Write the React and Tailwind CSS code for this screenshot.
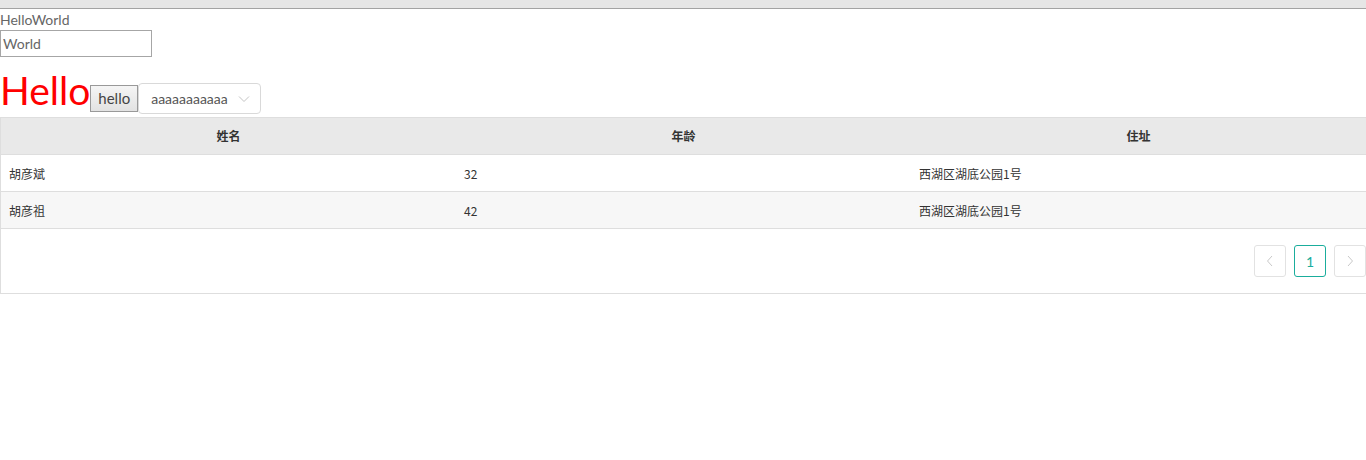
import React from 'react';

const rows = [
  { name: '胡彦斌', age: 32, address: '西湖区湖底公园1号' },
  { name: '胡彦祖', age: 42, address: '西湖区湖底公园1号' },
];

const latin = { fontFamily: 'Lato, "Noto Sans CJK SC", sans-serif' };
const cjk = { fontFamily: '"Noto Sans CJK SC", sans-serif' };

export default function App() {
  return (
    <div className="min-h-[460px] bg-white text-[#595959]" style={latin}>
      {/* top strip */}
      <div className="h-[9px] bg-[#e6e6e6] border-b border-[#a3a3a3]" />

      <div className="text-[14px] leading-[20px] pt-[1px] text-[#666]">HelloWorld</div>
      <input
        defaultValue="World"
        className="block w-[152px] h-[27px] px-[2px] text-[14px] text-[#666] border border-[#a6a6a6] outline-none"
        style={latin}
      />

      <div className="flex items-end mt-[9px]">
        <span className="text-[39px] leading-[48px] text-[#ff0000]">Hello</span>
        <button
          className="h-[27px] px-[7px] mb-[2px] text-[15px] text-[#444] border border-[#999] bg-gradient-to-b from-[#f5f5f5] to-[#e2e2e2]"
          style={latin}
        >
          hello
        </button>
        <div className="w-[123px] h-[31px] border border-[#d9d9d9] rounded-[4px] flex items-center justify-between pl-[12px] pr-[10px] text-[14px] text-[#555]">
          <span>aaaaaaaaaaa</span>
          <svg width="12" height="8" viewBox="0 0 12 8" fill="none" stroke="#c4c4c4" strokeWidth="1">
            <path d="M1 1.5 L6 6.5 L11 1.5" />
          </svg>
        </div>
      </div>

      {/* table */}
      <div className="mt-[3px] border border-[#dedede] w-[1367px]" style={cjk}>
        <div className="grid grid-cols-3 h-[37px] bg-[#e9e9e9] border-b border-[#dedede] text-[12px] font-bold text-[#333]">
          <div className="flex items-center justify-center">姓名</div>
          <div className="flex items-center justify-center">年龄</div>
          <div className="flex items-center justify-center">住址</div>
        </div>
        {rows.map((r, i) => (
          <div
            key={i}
            className={`grid grid-cols-3 h-[37px] border-b border-[#dedede] text-[12px] text-[#333] pt-[2px] ${i % 2 ? 'bg-[#f7f7f7]' : 'bg-white'}`}
          >
            <div className="flex items-center pl-[8px]">{r.name}</div>
            <div className="flex items-center pl-[8px]">{r.age}</div>
            <div className="flex items-center pl-[8px]">{r.address}</div>
          </div>
        ))}
        <div className="h-[64px] flex items-center justify-end gap-[8px]">
          <div className="w-[32px] h-[32px] border border-[#e2e2e2] rounded-[3px] flex items-center justify-center">
            <svg width="8" height="12" viewBox="0 0 8 12" fill="none" stroke="#c8c8c8" strokeWidth="1">
              <path d="M6 1 L1.5 6 L6 11" />
            </svg>
          </div>
          <div className="w-[32px] h-[32px] border border-[#1aad9c] rounded-[3px] flex items-center justify-center text-[14px] text-[#1aad9c]" style={latin}>
            1
          </div>
          <div className="w-[32px] h-[32px] border border-[#e2e2e2] rounded-[3px] flex items-center justify-center">
            <svg width="8" height="12" viewBox="0 0 8 12" fill="none" stroke="#c8c8c8" strokeWidth="1">
              <path d="M2 1 L6.5 6 L2 11" />
            </svg>
          </div>
        </div>
      </div>
    </div>
  );
}
